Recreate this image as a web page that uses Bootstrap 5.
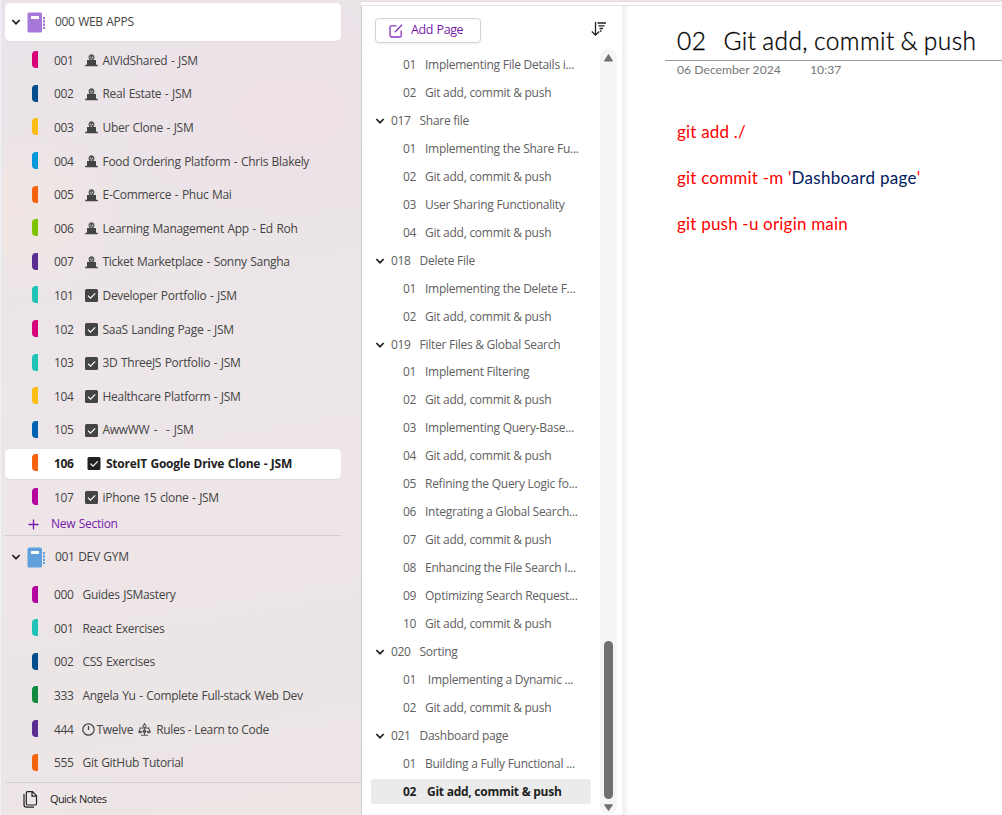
<!DOCTYPE html>
<html lang="en">
<head>
<meta charset="utf-8">
<meta name="viewport" content="width=device-width, initial-scale=1">
<title>Notebook</title>
<link href="https://cdn.jsdelivr.net/npm/bootstrap@5.3.0/dist/css/bootstrap.min.css" rel="stylesheet">
<style>
body{font-family:"Open Sans","Noto Sans",sans-serif;font-size:12px;color:#444;line-height:16px;height:815px;overflow:hidden;background:#fff}
.shell{height:815px}
.sidebar{width:361px;border-left:1px solid #eef2fb;background:
 radial-gradient(ellipse 190px 110px at 290px 110px,#eee0e7 0,#eee0e700 100%),
 radial-gradient(ellipse 120px 90px at 10px 210px,#f1e6e3 0,#f1e6e300 100%),
 linear-gradient(170deg,#eae4ea 0,#ebe4e7 25%,#ece6e8 45%,#eee5e7 65%,#ebe5e6 80%,#eee5e5 100%)}
.sidebar .book{height:38px;margin:0 20px 0 4px;padding-left:6px;border-radius:5px}
.book .label{margin-left:9px;letter-spacing:-.3px}
.book .cover{margin-left:6px}
.book.open{background:#fff;margin-top:3px;box-shadow:0 1px 1px #0000000c}
.sect{height:33.6px;padding-left:30.5px;white-space:pre}
.sect .tab{width:6px;height:17px;border-radius:4px 0 0 4px;background:var(--c);flex:none;margin-bottom:2px}
.sect .num{width:27px;margin-left:16.5px;letter-spacing:-.35px;flex:none}
.sect .ico{margin:0 5px 0 3.5px;flex:none}
.sect .num+.label{margin-left:1.5px}
.label{white-space:pre;letter-spacing:-.29px;word-spacing:.7px}
.sect.current .box{height:30px;margin-left:-26.5px;padding-left:26.5px;width:336px;background:#fff;border-radius:5px;box-shadow:0 1px 1px #0000000c}
.sect.current{font-weight:700;color:#222}
.sect.current .num{width:29.5px}
.sect.current .label{letter-spacing:-.26px}
.newsec{height:19.5px;padding-left:27px;color:#7719aa}
.newsec .label{margin-left:12px}
.rule{height:1px;background:#d1ccd0;margin:1px 20px 0 4px}
.quick{border-top:1px solid #d2d0d2;height:33px;margin-left:4px;padding-left:18px;font-size:11px;color:#222}
.quick .label{letter-spacing:-.6px}
.work{border-top:2px solid #ebe2e7}
.topline{height:4px;flex:none;border-bottom:1px solid #e3e1e3}
.pages{width:261px;border-left:1px solid #d0cdd1}
.addbtn{width:106px;height:25px;margin:12px 0 0 12.5px;border:1px solid #d3d3d3;border-radius:4px;color:#7719aa;background:#fff;box-shadow:0 1px 2px #00000014;padding:0 0 0 13px;font-size:12.5px;line-height:1}
.addbtn .label{margin-left:8.5px;letter-spacing:-.4px}
.pg{height:27.96px;padding-left:32px;width:220px;margin-left:9px;color:#606060;white-space:pre}
.pg .label{letter-spacing:-.26px;word-spacing:0}
.pg .num{width:22px;flex:none;letter-spacing:-.3px}
.pg.grp{padding-left:4px}
.pg.grp .num{width:28.5px;margin-left:6px}
.pg.chosen{height:25px;margin-top:1.5px;background:#ebebeb;border-radius:3px;font-weight:700;color:#222}
.pg.chosen .num{width:24px}
.track{width:17px;height:765px;margin:-2px 5px 0 0;background:#f5f5f5;border-radius:8px}
.thumb{width:9px;height:158px;border-radius:5px;background:#717171;margin-bottom:5px}
.gutter{width:7px;background:linear-gradient(90deg,#f2f2f2 0 4px,#fcfcfc 4px)}
.note{font-family:Lato,"Open Sans",sans-serif;padding-left:36px}
.note h1{font-weight:300;font-size:24.5px;line-height:30px;letter-spacing:.45px;word-spacing:-1.400px;-webkit-text-stroke:.3px #000;color:#000;margin:20px 0 0;padding:0 0 4px 12px;border-bottom:1px solid #999;white-space:pre}
.stamp{font-size:12.2px;color:#777;padding-left:12px;margin-top:1px}
.stamp .day{width:133px}
.gap-above{margin-top:43px}
.cmd{font-size:17px;line-height:22px;letter-spacing:.2px;color:#f00;padding-left:12px;margin-bottom:24px;white-space:pre}
.cmd .str{color:#002060;letter-spacing:.3px}
svg{display:block;flex:none}
</style>
</head>
<body>
<svg width="0" height="0" class="position-absolute" aria-hidden="true">
<symbol id="chev" viewBox="0 0 10 10"><path d="M1.3 3 5 6.7 8.7 3" fill="none" stroke="#222" stroke-width="1.7"/></symbol>
<symbol id="nb" viewBox="0 0 19 21"><path d="M2 .5h11.500a1.500 1.500 0 0 1 1.500 1.500v17a1.500 1.500 0 0 1-1.500 1.500H2A1.500 1.500 0 0 1 .5 19V2A1.500 1.500 0 0 1 2 .5Z" fill="currentColor"/><rect x="4" y="4" width="8" height="3" rx=".5" fill="#fff"/><path d="M17 5v12" stroke="currentColor" stroke-width="2" stroke-dasharray="2.300 1"/></symbol>
<symbol id="dev" viewBox="0 0 13 13"><path d="M3.600 3.300C3.600 1.300 4.800.3 6.500.3s2.900 1 2.900 3c0 1.300-.6 2.700-1.700 3.400H5.300C4.200 6 3.600 4.600 3.600 3.300Z" fill="#555"/><path d="M4.800 3.300H6M7 3.300h1.200M5.700 5h1.600" stroke="#ddd" stroke-width="1"/><path d="M2 6h9v5.500H2Z" fill="#444"/><path d="M.2 11.500h12.600" stroke="#444" stroke-width="1.500"/></symbol>
<symbol id="chk" viewBox="0 0 13 13"><rect width="13" height="13" rx="1.500" fill="currentColor"/><path d="m3 6.600 2.500 2.500L10.200 4.300" fill="none" stroke="#fff" stroke-width="1.200"/></symbol>
<symbol id="clock" viewBox="0 0 13 13"><circle cx="6.500" cy="6.500" r="5.700" fill="none" stroke="#444" stroke-width="1.200"/><path d="M6.500 3v4" stroke="#444" stroke-width="1.300"/></symbol>
<symbol id="scale" viewBox="0 0 13 13"><path d="M6.500 0v2M1.500 5h10M6.500 4v8M2.500 5 1.200 8M10.500 5l1.300 3M3 12.300h7" fill="none" stroke="#555" stroke-width="1.100"/><circle cx="6.500" cy="3" r="1.500" fill="none" stroke="#444"/><path d="M0 8h4.200L3.400 10.300H1ZM8.800 8H13l-1 2.300H9.600Z" fill="#555"/><circle cx="6.500" cy="8.300" r="1.900" fill="#555"/></symbol>
</svg>
<div class="shell d-flex">
<aside class="sidebar d-flex flex-column flex-shrink-0">
 <div class="book open d-flex align-items-center"><svg width="10" height="10"><use href="#chev"/></svg><svg class="cover" style="color:#a578da" width="19" height="21" ><use href="#nb"/></svg><span class="label">000 WEB APPS</span></div>
 <nav class="d-flex flex-column" style="padding-top:3px">
 <div class="sect d-flex align-items-center" style="--c:#d6007b"><i class="tab"></i><span class="num">001</span><svg class="ico" width="13" height="13"><use href="#dev"/></svg><span class="label">AIVidShared - JSM</span></div>
 <div class="sect d-flex align-items-center" style="--c:#004e8c"><i class="tab"></i><span class="num">002</span><svg class="ico" width="13" height="13"><use href="#dev"/></svg><span class="label">Real Estate - JSM</span></div>
 <div class="sect d-flex align-items-center" style="--c:#fcbd17"><i class="tab"></i><span class="num">003</span><svg class="ico" width="13" height="13"><use href="#dev"/></svg><span class="label">Uber Clone - JSM</span></div>
 <div class="sect d-flex align-items-center" style="--c:#0099dc"><i class="tab"></i><span class="num">004</span><svg class="ico" width="13" height="13"><use href="#dev"/></svg><span class="label">Food Ordering Platform - Chris Blakely</span></div>
 <div class="sect d-flex align-items-center" style="--c:#f7630c"><i class="tab"></i><span class="num">005</span><svg class="ico" width="13" height="13"><use href="#dev"/></svg><span class="label">E-Commerce - Phuc Mai</span></div>
 <div class="sect d-flex align-items-center" style="--c:#7cc400"><i class="tab"></i><span class="num">006</span><svg class="ico" width="13" height="13"><use href="#dev"/></svg><span class="label">Learning Management App - Ed Roh</span></div>
 <div class="sect d-flex align-items-center" style="--c:#5c2d91"><i class="tab"></i><span class="num">007</span><svg class="ico" width="13" height="13"><use href="#dev"/></svg><span class="label">Ticket Marketplace - Sonny Sangha</span></div>
 <div class="sect d-flex align-items-center" style="--c:#1fc4b4"><i class="tab"></i><span class="num">101</span><svg class="ico" width="13" height="13"><use href="#chk"/></svg><span class="label">Developer Portfolio - JSM</span></div>
 <div class="sect d-flex align-items-center" style="--c:#d6007b"><i class="tab"></i><span class="num">102</span><svg class="ico" width="13" height="13"><use href="#chk"/></svg><span class="label">SaaS Landing Page - JSM</span></div>
 <div class="sect d-flex align-items-center" style="--c:#1fc4b4"><i class="tab"></i><span class="num">103</span><svg class="ico" width="13" height="13"><use href="#chk"/></svg><span class="label">3D ThreeJS Portfolio - JSM</span></div>
 <div class="sect d-flex align-items-center" style="--c:#fcbd17"><i class="tab"></i><span class="num">104</span><svg class="ico" width="13" height="13"><use href="#chk"/></svg><span class="label">Healthcare Platform - JSM</span></div>
 <div class="sect d-flex align-items-center" style="--c:#0063b1"><i class="tab"></i><span class="num">105</span><svg class="ico" width="13" height="13"><use href="#chk"/></svg><span class="label" style="word-spacing:1.500px">AwwWW -  - JSM</span></div>
 <div class="sect current d-flex align-items-center" style="--c:#f7630c"><div class="box d-flex align-items-center"><i class="tab"></i><span class="num">106</span><svg class="ico" width="14" height="13"><use href="#chk"/></svg><span class="label">StoreIT Google Drive Clone - JSM</span></div></div>
 <div class="sect d-flex align-items-center" style="--c:#b4009e"><i class="tab"></i><span class="num">107</span><svg class="ico" width="13" height="13"><use href="#chk"/></svg><span class="label">iPhone 15 clone - JSM</span></div>
 </nav>
 <div class="newsec d-flex align-items-center"><svg width="11" height="11" viewBox="0 0 11 11"><path d="M5.500 .5v10M.5 5.500h10" stroke="#7719aa" stroke-width="1.300"/></svg><span class="label">New Section</span></div>
 <div class="rule"></div>
 <div class="book d-flex align-items-center" style="height:42.600px"><svg width="10" height="10"><use href="#chev"/></svg><svg class="cover" style="color:#62a0dc" width="19" height="21"><use href="#nb"/></svg><span class="label">001 DEV GYM</span></div>
 <nav class="d-flex flex-column">
 <div class="sect d-flex align-items-center" style="--c:#b4009e"><i class="tab"></i><span class="num">000</span><span class="label">Guides JSMastery</span></div>
 <div class="sect d-flex align-items-center" style="--c:#1fc4b4"><i class="tab"></i><span class="num">001</span><span class="label">React Exercises</span></div>
 <div class="sect d-flex align-items-center" style="--c:#004e8c"><i class="tab"></i><span class="num">002</span><span class="label">CSS Exercises</span></div>
 <div class="sect d-flex align-items-center" style="--c:#10893e"><i class="tab"></i><span class="num">333</span><span class="label">Angela Yu - Complete Full-stack Web Dev</span></div>
 <div class="sect d-flex align-items-center" style="--c:#5c2d91"><i class="tab"></i><span class="num">444</span><svg style="margin-left:.500px" width="13" height="13"><use href="#clock"/></svg><span class="label" style="margin-left:2px">Twelve</span><svg style="margin:0 5px" width="13" height="13"><use href="#scale"/></svg><span class="label" style="word-spacing:0">Rules - Learn to Code</span></div>
 <div class="sect d-flex align-items-center" style="--c:#f7630c"><i class="tab"></i><span class="num">555</span><span class="label">Git GitHub Tutorial</span></div>
 </nav>
 <div class="quick d-flex align-items-center mt-auto"><svg width="15" height="17" viewBox="0 0 15 17"><path d="M4.500.7h5l4 4v8.100a1.200 1.200 0 0 1-1.200 1.200H4.500a1.200 1.200 0 0 1-1.200-1.200V1.900A1.200 1.200 0 0 1 4.500.7ZM9 .9v4.300h4.300M1 3v10.500a2.700 2.700 0 0 0 2.700 2.700H11" fill="none" stroke="#222" stroke-width="1.200"/></svg><span class="label" style="margin-left:12px">Quick Notes</span></div>
</aside>
<div class="work flex-grow-1 d-flex flex-column">
 <div class="topline"></div>
 <div class="d-flex flex-grow-1">
 <section class="pages d-flex flex-column">
  <div class="d-flex">
   <button class="addbtn d-flex align-items-center" type="button"><svg width="14" height="14" viewBox="0 0 14 14"><path d="M7.500 1.800H2.600A1.600 1.600 0 0 0 1 3.400v8A1.600 1.600 0 0 0 2.600 13h8a1.600 1.600 0 0 0 1.600-1.600V6.500M5.800 8.200 13 .8" fill="none" stroke="#8a35bd" stroke-width="1.300"/></svg><span class="label">Add Page</span></button>
   <svg style="margin:15px 0 0 110.500px" width="16" height="16" viewBox="0 0 16 16"><path d="M4.500 1v13M.8 10.500l3.700 3.700 3.700-3.700M6.500 2H15M7.500 4.800h6M8.500 7.500h3.500M9 10h1.500" fill="none" stroke="#222" stroke-width="1.300"/></svg>
  </div>
  <div class="d-flex justify-content-between" style="margin-top:8px">
   <div>
   <div class="pg d-flex align-items-center"><span class="num">01</span><span class="label">Implementing File Details i...</span></div>
   <div class="pg d-flex align-items-center"><span class="num">02</span><span class="label">Git add, commit &amp; push</span></div>
   <div class="pg grp d-flex align-items-center"><svg width="10" height="10"><use href="#chev"/></svg><span class="num">017</span><span class="label">Share file</span></div>
   <div class="pg d-flex align-items-center"><span class="num">01</span><span class="label">Implementing the Share Fu...</span></div>
   <div class="pg d-flex align-items-center"><span class="num">02</span><span class="label">Git add, commit &amp; push</span></div>
   <div class="pg d-flex align-items-center"><span class="num">03</span><span class="label">User Sharing Functionality</span></div>
   <div class="pg d-flex align-items-center"><span class="num">04</span><span class="label">Git add, commit &amp; push</span></div>
   <div class="pg grp d-flex align-items-center"><svg width="10" height="10"><use href="#chev"/></svg><span class="num">018</span><span class="label">Delete File</span></div>
   <div class="pg d-flex align-items-center"><span class="num">01</span><span class="label">Implementing the Delete F...</span></div>
   <div class="pg d-flex align-items-center"><span class="num">02</span><span class="label">Git add, commit &amp; push</span></div>
   <div class="pg grp d-flex align-items-center"><svg width="10" height="10"><use href="#chev"/></svg><span class="num">019</span><span class="label">Filter Files &amp; Global Search</span></div>
   <div class="pg d-flex align-items-center"><span class="num">01</span><span class="label">Implement Filtering</span></div>
   <div class="pg d-flex align-items-center"><span class="num">02</span><span class="label">Git add, commit &amp; push</span></div>
   <div class="pg d-flex align-items-center"><span class="num">03</span><span class="label">Implementing Query-Base...</span></div>
   <div class="pg d-flex align-items-center"><span class="num">04</span><span class="label">Git add, commit &amp; push</span></div>
   <div class="pg d-flex align-items-center"><span class="num">05</span><span class="label">Refining the Query Logic fo...</span></div>
   <div class="pg d-flex align-items-center"><span class="num">06</span><span class="label">Integrating a Global Search...</span></div>
   <div class="pg d-flex align-items-center"><span class="num">07</span><span class="label">Git add, commit &amp; push</span></div>
   <div class="pg d-flex align-items-center"><span class="num">08</span><span class="label">Enhancing the File Search I...</span></div>
   <div class="pg d-flex align-items-center"><span class="num">09</span><span class="label">Optimizing Search Request...</span></div>
   <div class="pg d-flex align-items-center"><span class="num">10</span><span class="label">Git add, commit &amp; push</span></div>
   <div class="pg grp d-flex align-items-center"><svg width="10" height="10"><use href="#chev"/></svg><span class="num">020</span><span class="label">Sorting</span></div>
   <div class="pg d-flex align-items-center"><span class="num">01</span><span class="label"> Implementing a Dynamic ...</span></div>
   <div class="pg d-flex align-items-center"><span class="num">02</span><span class="label">Git add, commit &amp; push</span></div>
   <div class="pg grp d-flex align-items-center"><svg width="10" height="10"><use href="#chev"/></svg><span class="num">021</span><span class="label">Dashboard page</span></div>
   <div class="pg d-flex align-items-center"><span class="num">01</span><span class="label">Building a Fully Functional ...</span></div>
   <div class="pg chosen d-flex align-items-center"><span class="num">02</span><span class="label">Git add, commit &amp; push</span></div>
   </div>
   <div class="track d-flex flex-column align-items-center"><svg style="margin-top:5px" width="9" height="8" viewBox="0 0 9 8"><path d="M4.500.5 8.500 7h-8Z" fill="#717171" stroke="#717171" stroke-linejoin="round"/></svg><div class="thumb mt-auto"></div><svg style="margin-bottom:3px" width="9" height="7" viewBox="0 0 9 7"><path d="M4.500 6.500 8.500.8h-8Z" fill="#717171" stroke="#717171" stroke-linejoin="round"/></svg></div>
  </div>
 </section>
 <div class="gutter"></div>
 <main class="note flex-grow-1">
  <h1>02   Git add, commit &amp; push</h1>
  <div class="stamp d-flex"><span class="day">06 December 2024</span><span>10:37</span></div>
  <div class="cmd gap-above">git add ./</div>
  <div class="cmd">git commit -m '<span class="str">Dashboard page</span>'</div>
  <div class="cmd">git push -u origin main</div>
 </main>
 </div>
</div>
</div>
<script src="https://cdn.jsdelivr.net/npm/bootstrap@5.3.0/dist/js/bootstrap.bundle.min.js"></script>
</body>
</html>
